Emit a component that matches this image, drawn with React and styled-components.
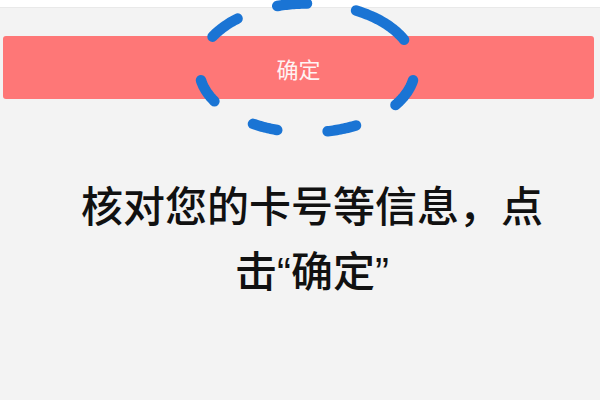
import React from "react";
import styled, { createGlobalStyle } from "styled-components";

const Global = createGlobalStyle`
  html, body { margin: 0; padding: 0; }
  body {
    background: #f3f3f3;
    font-family: "Liberation Sans", "Noto Sans CJK SC", sans-serif;
    width: 600px;
    height: 400px;
    overflow: hidden;
  }
`;

const Page = styled.div`
  position: relative;
  width: 600px;
  height: 400px;
  background: #f3f3f3;
  display: flex;
  flex-direction: column;
`;

const TopStrip = styled.div`
  height: 7px;
  background: #ffffff;
  border-bottom: 1px solid #e9e9e9;
`;

const ButtonRow = styled.div`
  padding: 28px 6px 0 3px;
`;

const ConfirmButton = styled.button`
  display: flex;
  align-items: center;
  justify-content: center;
  width: 100%;
  height: 63px;
  border: none;
  border-radius: 3px;
  background: #fe7777;
  color: #fff3f3;
  font-family: "Noto Sans CJK SC", sans-serif;
  font-size: 22px;
  font-weight: 400;
  padding: 0;
`;

const Caption = styled.p`
  margin: 76px 0 0 72px;
  width: 480px;
  text-align: center;
  font-size: 42px;
  line-height: 65px;
  font-weight: 500;
  color: #111111;
`;

const Overlay = styled.svg`
  position: absolute;
  left: 185px;
  top: 0;
  width: 245px;
  height: 145px;
  pointer-events: none;
  overflow: visible;
`;

const CX = 122;
const CY = 68;
const RX = 108;
const RY = 64.5;

const dashes = [
  [254, 270],
  [297, 334],
  [11, 35],
  [63, 79],
  [106, 120],
  [149, 169],
  [209, 230],
];

function arcPath([a, b]) {
  const pts = [];
  const steps = 16;
  for (let i = 0; i <= steps; i++) {
    const t = ((a + ((b - a) * i) / steps) * Math.PI) / 180;
    pts.push(`${(CX + RX * Math.cos(t)).toFixed(2)} ${(CY + RY * Math.sin(t)).toFixed(2)}`);
  }
  return "M" + pts.join(" L");
}

function DashedCircle() {
  return (
    <Overlay viewBox="0 0 245 145">
      {dashes.map((d, i) => (
        <path
          key={i}
          d={arcPath(d)}
          fill="none"
          stroke="#1a74d4"
          strokeWidth="10.5"
          strokeLinecap="round"
          strokeLinejoin="round"
        />
      ))}
    </Overlay>
  );
}

export default function App() {
  return (
    <>
      <Global />
      <Page>
        <TopStrip />
        <ButtonRow>
          <ConfirmButton>确定</ConfirmButton>
        </ButtonRow>
        <Caption lang="zh-CN">核对您的卡号等信息，点击“确定”</Caption>
        <DashedCircle />
      </Page>
    </>
  );
}
